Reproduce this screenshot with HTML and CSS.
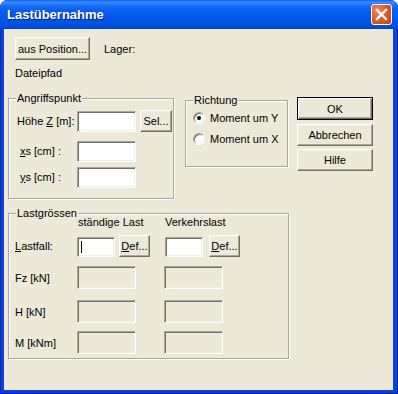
FILE: index.html
```html
<!DOCTYPE html>
<html>
<head>
    <meta charset="UTF-8">
    <title>Lastübernahme</title>
    <link rel="stylesheet" href="styles.css">
</head>
<body>
    <div class="window">
        <div class="titlebar">
            <span class="title">Lastübernahme</span>
            <span class="close">
                <svg width="19" height="19" viewBox="0 0 19 19">
                    <path d="M5 5 L14 14 M14 5 L5 14" stroke="#fff" stroke-width="2.4" stroke-linecap="square" fill="none"/>
                </svg>
            </span>
        </div>

        <div class="client">
            <div class="top-row">
                <span class="btn btn-pos">aus Position...</span>
                <span>Lager:</span>
            </div>
            <div class="path">Dateipfad</div>

            <div class="middle">
                <div class="group group-attack">
                    <span class="group-label">Angriffspunkt</span>
                    <div class="row row-z">
                        <span class="lbl">Höhe <u>Z</u> [m]:</span>
                        <span class="edit edit-z"></span>
                        <span class="btn btn-sel">Sel...</span>
                    </div>
                    <div class="row row-xs">
                        <span class="lbl lbl-indent"><u>x</u>s [cm] :</span>
                        <span class="edit edit-z"></span>
                    </div>
                    <div class="row row-ys">
                        <span class="lbl lbl-indent"><u>y</u>s [cm] :</span>
                        <span class="edit edit-z"></span>
                    </div>
                </div>

                <div class="group group-dir">
                    <span class="group-label">Richtung</span>
                    <div class="radio-row"><span class="radio checked"></span>Moment um Y</div>
                    <div class="radio-row second"><span class="radio"></span>Moment um X</div>
                </div>

                <div class="actions">
                    <span class="btn btn-default">OK</span>
                    <span class="btn btn-cancel">Abbrechen</span>
                    <span class="btn btn-help">Hilfe</span>
                </div>
            </div>

            <div class="group group-loads">
                <span class="group-label">Lastgrössen</span>
                <div class="head-row">
                    <span class="col-perm">ständige Last</span>
                    <span class="col-traffic">Verkehrslast</span>
                </div>
                <div class="load-row case-row">
                    <span class="lbl lbl-load"><u>L</u>astfall:</span>
                    <span class="edit edit-case"><span class="caret"></span></span>
                    <span class="btn btn-def"><u>D</u>ef...</span>
                    <span class="edit edit-case edit-case2"></span>
                    <span class="btn btn-def btn-def2"><u>D</u>ef...</span>
                </div>
                <div class="load-row val-row row-fz">
                    <span class="lbl lbl-load">Fz [kN]</span>
                    <span class="edit edit-off"></span>
                    <span class="edit edit-off edit-off2"></span>
                </div>
                <div class="load-row val-row row-h">
                    <span class="lbl lbl-load">H [kN]</span>
                    <span class="edit edit-off"></span>
                    <span class="edit edit-off edit-off2"></span>
                </div>
                <div class="load-row val-row row-m">
                    <span class="lbl lbl-load">M [kNm]</span>
                    <span class="edit edit-off"></span>
                    <span class="edit edit-off edit-off2"></span>
                </div>
            </div>
        </div>
    </div>
</body>
</html>
```

FILE: styles.css
```css
body {
    margin: 0;
    background: #fff;
    font-family: "Liberation Sans", Arial, sans-serif;
    font-size: 11px;
    color: #000;
}

.window {
    width: 398px;
    height: 394px;
    display: flex;
    flex-direction: column;
    background: #0842d6;
    border-radius: 8px 8px 0 0;
    box-shadow: inset 1px 0 #0a2ea8, inset -1px -1px #001c9a;
    overflow: hidden;
}

.titlebar {
    height: 29px;
    flex: none;
    display: flex;
    align-items: center;
    justify-content: space-between;
    padding: 0 6px 0 7px;
    background: linear-gradient(to bottom, #0b5ff0 0, #3f8cff 2px, #1c72f6 5px, #0a5ef0 10px, #0056e8 18px, #0052e0 25px, #0046c6 29px);
}

.title {
    color: #fff;
    font-weight: bold;
    font-size: 13px;
    text-shadow: 1px 1px #0a1e80;
}

.close {
    width: 19px;
    height: 19px;
    border: 1px solid #fff;
    border-radius: 3px;
    background: radial-gradient(circle at 30% 30%, #f08a66 0, #e05a30 45%, #c8401a 100%);
    display: flex;
    align-items: center;
    justify-content: center;
}

.client {
    flex: 1;
    margin: 0 5px 4px 4px;
    padding: 8px 0 0 4px;
    background: #ece9d8;
}

/* buttons and edits */

.btn {
    box-sizing: border-box;
    display: flex;
    align-items: center;
    justify-content: center;
    background: #ece9d8;
    border: 1px solid;
    border-color: #fff #716f64 #716f64 #fff;
    box-shadow: inset -1px -1px #aca899, inset 1px 1px #f1efe2;
    white-space: nowrap;
}

.btn-default {
    border-color: #000;
    box-shadow: inset 1px 1px #fff, inset -1px -1px #716f64, inset -2px -2px #aca899;
}

.edit {
    box-sizing: border-box;
    display: block;
    background: #fff;
    border: 1px solid;
    border-color: #aca899 #fff #fff #aca899;
    box-shadow: inset 1px 1px #716f64, inset -1px -1px #f1efe2;
}

.edit-off {
    background: #ece9d8;
    width: 59px;
    height: 23px;
}

/* top */

.top-row {
    display: flex;
    align-items: center;
    gap: 14px;
    margin-left: 7px;
}

.btn-pos {
    width: 75px;
    height: 23px;
}

.path {
    margin: 7px 0 0 7px;
    line-height: 13px;
}

/* groups */

.group {
    position: relative;
    box-sizing: border-box;
    border: 1px solid #aca899;
    box-shadow: inset 1px 1px #fff, 1px 1px #fff;
}

.group-label {
    position: absolute;
    top: -7px;
    left: 7px;
    padding: 0 1px;
    line-height: 13px;
    background: #ece9d8;
}

.middle {
    display: flex;
    align-items: flex-start;
    margin-top: 18px;
}

.group-attack {
    width: 166px;
    height: 101px;
    padding: 11px 0 0 8px;
}

.row {
    display: flex;
    align-items: center;
    height: 22px;
}

.row-xs {
    margin-top: 8px;
}

.row-ys {
    margin-top: 4px;
}

.lbl {
    width: 60px;
    flex: none;
}

.lbl-indent {
    box-sizing: border-box;
    padding-left: 3px;
}

.edit-z {
    width: 59px;
    height: 21px;
}

.btn-sel {
    width: 32px;
    height: 22px;
    margin-left: 4px;
}

.group-dir {
    width: 103px;
    height: 67px;
    margin: 2px 0 0 11px;
    padding: 10px 0 0 7px;
}

.radio-row {
    display: flex;
    align-items: center;
    gap: 5px;
    height: 13px;
}

.radio-row.second {
    margin-top: 8px;
}

.radio {
    position: relative;
    box-sizing: border-box;
    width: 12px;
    height: 12px;
    border-radius: 50%;
    border: 1px solid;
    border-color: #aca899 #fff #fff #aca899;
    box-shadow: inset 1px 1px #716f64, inset -1px -1px #f1efe2;
    background: #fff;
}

.radio.checked::after {
    content: "";
    position: absolute;
    left: 3px;
    top: 3px;
    width: 4px;
    height: 4px;
    border-radius: 50%;
    background: #000;
}

.actions {
    display: flex;
    flex-direction: column;
    margin: -1px 0 0 9px;
}

.actions .btn {
    width: 76px;
    height: 22px;
}

.actions .btn-default {
    height: 23px;
}

.btn-cancel {
    margin-top: 4px;
}

.btn-help {
    margin-top: 3px;
}

/* loads */

.group-loads {
    width: 281px;
    height: 146px;
    margin-top: 14px;
    padding: 2px 0 0 6px;
}

.head-row {
    display: flex;
    line-height: 13px;
}

.col-perm {
    margin-left: 63px;
    width: 87px;
}

.load-row {
    display: flex;
    align-items: center;
}

.lbl-load {
    width: 62px;
}

.case-row {
    height: 22px;
    margin-top: 6px;
}

.edit-case {
    position: relative;
    width: 38px;
    height: 20px;
    margin-top: 2px;
}

.edit-case2 {
    margin-left: 15px;
}

.caret {
    position: absolute;
    left: 3px;
    top: 3px;
    width: 1px;
    height: 12px;
    background: #000;
}

.btn-def {
    width: 31px;
    height: 22px;
    margin-left: 4px;
}

.btn-def2 {
    margin-left: 6px;
}

.val-row {
    height: 23px;
}

.row-fz {
    margin-top: 9px;
}

.row-h {
    margin-top: 11px;
}

.row-m {
    margin-top: 8px;
}

.edit-off2 {
    margin-left: 28px;
}
```
